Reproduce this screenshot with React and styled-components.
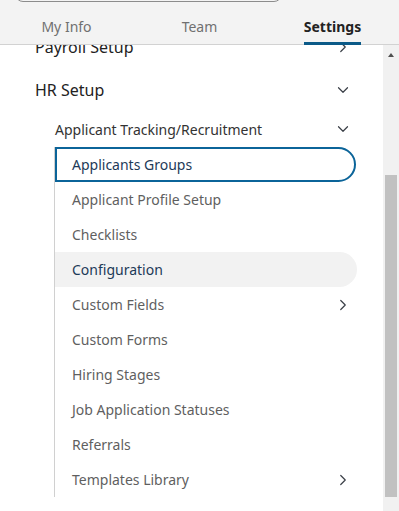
import React, { useCallback, useLayoutEffect, useRef, useState } from 'react';
import styled, { createGlobalStyle } from 'styled-components';
import { ChevronDown, ChevronRight } from 'lucide-react';

const GlobalStyle = createGlobalStyle`
  html, body {
    margin: 0;
    padding: 0;
    height: 100%;
    overflow: hidden;
  }
  body {
    font-family: "Noto Sans", "Open Sans", sans-serif;
    background: #ffffff;
  }
  #root {
    height: 100%;
  }
`;

const Page = styled.div`
  height: 100vh;
  display: flex;
  flex-direction: column;
  overflow: hidden;
`;

const Header = styled.header`
  flex: none;
  background: #f3f3f3;
`;

const SearchWrap = styled.div`
  padding: 0 15px;
`;

const SearchBox = styled.div`
  box-sizing: border-box;
  width: 267px;
  height: 30px;
  margin-top: -28px;
  border: 1px solid #8c8c8c;
  border-radius: 8px;
`;

const TabBar = styled.nav`
  box-sizing: border-box;
  height: 43px;
  display: grid;
  grid-template-columns: repeat(3, 1fr);
  border-bottom: 1px solid #d2d2d2;
`;

const Tab = styled.div`
  display: flex;
  justify-content: center;
  align-items: flex-end;
`;

const TabLabel = styled.span`
  font-size: 14px;
  line-height: 20px;
  padding-bottom: 5px;
  margin-bottom: -1px;
  border-bottom: 3px solid ${(p) => (p.$active ? '#0b5a88' : 'transparent')};
  color: ${(p) => (p.$active ? '#222222' : '#707070')};
  font-weight: ${(p) => (p.$active ? 700 : 400)};
`;

const Body = styled.div`
  flex: 1;
  min-height: 0;
  display: flex;
`;

const ScrollArea = styled.div`
  flex: 1;
  min-width: 0;
  overflow-y: auto;
  background: #ffffff;
  scrollbar-width: none;
  &::-webkit-scrollbar {
    display: none;
  }
`;

const ScrollRail = styled.div`
  flex: none;
  width: 16px;
  display: flex;
  flex-direction: column;
  background: #f1f1f1;
`;

const ArrowButton = styled.div`
  flex: none;
  height: 16px;
  box-sizing: border-box;
  padding-top: 8px;
  display: flex;
  justify-content: center;
  align-items: flex-start;

  &::before {
    content: '';
    width: 0;
    height: 0;
    border-left: 3.5px solid transparent;
    border-right: 3.5px solid transparent;
    border-bottom: 4px solid #505050;
  }
`;

const Track = styled.div`
  flex: 1;
  position: relative;
`;

const Thumb = styled.div`
  position: absolute;
  left: 2px;
  right: 2px;
  background: #c1c1c1;
`;

const Menu = styled.div`
  padding: 145px 26px 34px 35px;
`;

const SectionRow = styled.div`
  height: 43px;
  display: flex;
  align-items: center;
  justify-content: space-between;
  font-size: 16px;
  color: #222222;
`;

const Chevron = styled.span`
  display: flex;
  margin-right: 5px;
  color: #3a3f47;
`;

const Group = styled.div`
  padding-left: 20px;
`;

const GroupRow = styled.div`
  height: 36px;
  display: flex;
  align-items: center;
  justify-content: space-between;
  font-size: 14px;
  color: #333333;
`;

const ItemList = styled.ul`
  list-style: none;
  margin: 0 0 0 -1px;
  padding: 0;
  border-left: 1px solid #d0d0d0;
`;

const Item = styled.li`
  box-sizing: border-box;
  height: 35px;
  display: flex;
  align-items: center;
  justify-content: space-between;
  padding: 0 0 0 ${(p) => (p.$selected ? 15 : 17)}px;
  font-size: 14px;
  color: ${(p) => (p.$selected || p.$hover ? '#1d3a58' : '#5f5f5f')};
  border: ${(p) => (p.$selected ? '2px solid #0b6499' : 'none')};
  border-radius: 0 18px 18px 0;
  background: ${(p) => (p.$hover ? '#f2f2f2' : 'transparent')};
  margin-right: ${(p) => (p.$selected ? 1 : 0)}px;
`;

const items = [
  { label: 'Applicants Groups', selected: true },
  { label: 'Applicant Profile Setup' },
  { label: 'Checklists' },
  { label: 'Configuration', hover: true },
  { label: 'Custom Fields', sub: true },
  { label: 'Custom Forms' },
  { label: 'Hiring Stages' },
  { label: 'Job Application Statuses' },
  { label: 'Referrals' },
  { label: 'Templates Library', sub: true },
];

export default function App() {
  const scrollRef = useRef(null);
  const trackRef = useRef(null);
  const [thumb, setThumb] = useState({ top: 0, height: 0 });

  const measure = useCallback(() => {
    const el = scrollRef.current;
    const tr = trackRef.current;
    if (!el || !tr) return;
    const trackH = tr.clientHeight;
    const viewH = el.clientHeight;
    const totalH = el.scrollHeight;
    const maxScroll = Math.max(1, totalH - viewH);
    const height = Math.max(20, (trackH * viewH) / totalH);
    const top = ((trackH - height) * el.scrollTop) / maxScroll;
    setThumb({ top, height });
  }, []);

  useLayoutEffect(() => {
    if (scrollRef.current) scrollRef.current.scrollTop = 165;
    measure();
  }, [measure]);

  return (
    <Page>
      <GlobalStyle />
      <Header>
        <SearchWrap>
          <SearchBox role="search" />
        </SearchWrap>
        <TabBar>
          <Tab>
            <TabLabel>My Info</TabLabel>
          </Tab>
          <Tab>
            <TabLabel>Team</TabLabel>
          </Tab>
          <Tab>
            <TabLabel $active>Settings</TabLabel>
          </Tab>
        </TabBar>
      </Header>
      <Body>
        <ScrollArea ref={scrollRef} onScroll={measure}>
          <Menu>
            <SectionRow>
              <span>Payroll Setup</span>
              <Chevron>
                <ChevronRight size={18} strokeWidth={1.6} />
              </Chevron>
            </SectionRow>
            <SectionRow>
              <span>HR Setup</span>
              <Chevron>
                <ChevronDown size={18} strokeWidth={1.6} />
              </Chevron>
            </SectionRow>
            <Group>
              <GroupRow>
                <span>Applicant Tracking/Recruitment</span>
                <Chevron>
                  <ChevronDown size={18} strokeWidth={1.6} />
                </Chevron>
              </GroupRow>
              <ItemList>
                {items.map((it) => (
                  <Item key={it.label} $selected={it.selected} $hover={it.hover}>
                    <span>{it.label}</span>
                    {it.sub && (
                      <Chevron>
                        <ChevronRight size={18} strokeWidth={1.6} />
                      </Chevron>
                    )}
                  </Item>
                ))}
              </ItemList>
            </Group>
          </Menu>
        </ScrollArea>
        <ScrollRail>
          <ArrowButton />
          <Track ref={trackRef}>
            <Thumb style={{ top: thumb.top, height: thumb.height }} />
          </Track>
        </ScrollRail>
      </Body>
    </Page>
  );
}
